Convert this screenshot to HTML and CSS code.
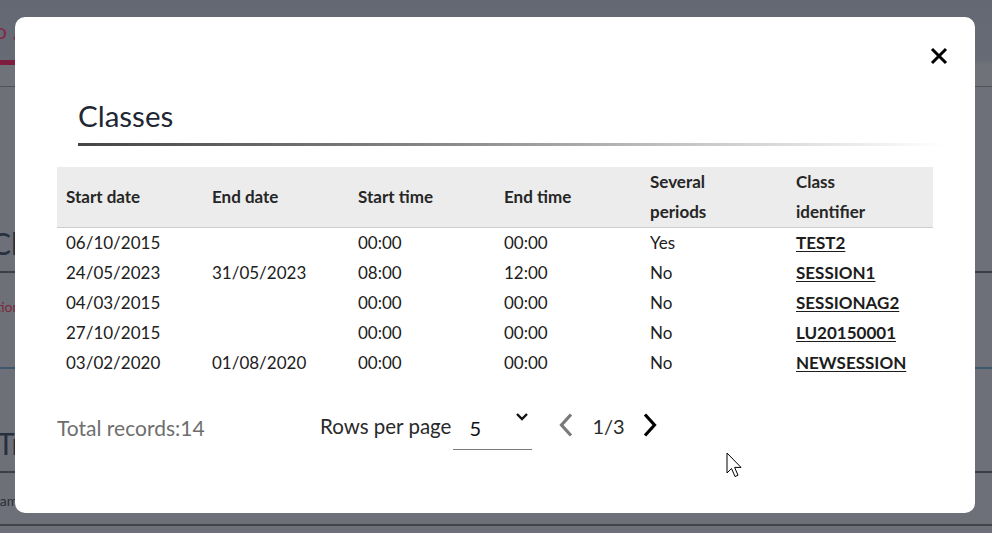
FILE: index.html
```html
<!DOCTYPE html>
<html lang="en">
<head>
<meta charset="utf-8">
<title>Classes</title>
<link rel="stylesheet" href="styles.css">
</head>
<body>
<div class="page">
  <header class="topbar">
    <div class="nav">
      <span class="nav-item">Info /</span>
    </div>
    <div class="nav-bar"></div>
  </header>
  <main class="content">
    <h2 class="bg-title">Classes</h2>
    <p class="bg-link">Action</p>
    <div class="bg-divider"></div>
    <h2 class="bg-title second">Trainers</h2>
    <p class="bg-text">name</p>
  </main>
</div>

<div class="overlay">
  <div class="modal">
    <div class="close-row">
      <button class="close" aria-label="Close">
        <svg width="18" height="18" viewBox="0 0 18 18"><path d="M2 2 L16 16 M16 2 L2 16" stroke="#000" stroke-width="3" stroke-linecap="butt"/></svg>
      </button>
    </div>
    <h1 class="title">Classes</h1>
    <table class="grid">
      <thead>
        <tr>
          <th>Start date</th>
          <th>End date</th>
          <th>Start time</th>
          <th>End time</th>
          <th>Several periods</th>
          <th>Class identifier</th>
        </tr>
      </thead>
      <tbody>
        <tr><td>06/10/2015</td><td></td><td>00:00</td><td>00:00</td><td>Yes</td><td><a href="#">TEST2</a></td></tr>
        <tr><td>24/05/2023</td><td>31/05/2023</td><td>08:00</td><td>12:00</td><td>No</td><td><a href="#">SESSION1</a></td></tr>
        <tr><td>04/03/2015</td><td></td><td>00:00</td><td>00:00</td><td>No</td><td><a href="#">SESSIONAG2</a></td></tr>
        <tr><td>27/10/2015</td><td></td><td>00:00</td><td>00:00</td><td>No</td><td><a href="#">LU20150001</a></td></tr>
        <tr><td>03/02/2020</td><td>01/08/2020</td><td>00:00</td><td>00:00</td><td>No</td><td><a href="#">NEWSESSION</a></td></tr>
      </tbody>
    </table>
    <div class="footer">
      <div class="total">Total records:14</div>
      <div class="pager">
        <span class="rows-label">Rows per page</span>
        <div class="select">
          <span class="select-value">5</span>
          <svg class="select-caret" width="12" height="8" viewBox="0 0 12 8"><path d="M1 1 L6 6 L11 1" fill="none" stroke="#111" stroke-width="2.4"/></svg>
        </div>
        <button class="nav-btn prev" aria-label="Previous">
          <svg width="14" height="24" viewBox="0 0 14 24"><path d="M12 1.5 L2.5 12 L12 22.5" fill="none" stroke="#7a7a7a" stroke-width="3.2"/></svg>
        </button>
        <span class="page-num">1/3</span>
        <button class="nav-btn next" aria-label="Next">
          <svg width="14" height="24" viewBox="0 0 14 24"><path d="M2 1.5 L11.5 12 L2 22.5" fill="none" stroke="#000" stroke-width="3.2"/></svg>
        </button>
      </div>
    </div>
  </div>
</div>

<svg class="cursor" width="20" height="30" viewBox="0 0 20 30"><path d="M1 1 L1 21 L5.5 16.5 L9 24.5 L12 23.2 L8.6 15.4 L15 15.4 Z" fill="#fff" stroke="#000" stroke-width="1" stroke-linejoin="miter"/></svg>
</body>
</html>
```

FILE: styles.css
```css
html, body {
  margin: 0;
  padding: 0;
}
body {
  width: 992px;
  height: 533px;
  overflow: hidden;
  background: #6d7079;
  font-family: Lato, "Open Sans", sans-serif;
}

/* ---------- dimmed page behind the dialog ---------- */
.page {
  height: 533px;
  display: flex;
  flex-direction: column;
}
.topbar {
  height: 86px;
  background: linear-gradient(180deg, #636873 0%, #666b75 60px, #6f7279 64px, #6f7279 100%);
  border-bottom: 1px solid #4f525a;
  display: flex;
  flex-direction: column;
}
.nav {
  height: 60px;
  display: flex;
  align-items: center;
}
.nav-item {
  margin-left: -31px;
  color: #82294a;
  font-size: 22px;
  white-space: nowrap;
}
.nav-bar {
  height: 5px;
  width: 60px;
  background: #7e1d3e;
}
.content {
  flex: 1;
  display: flex;
  flex-direction: column;
  border-bottom: 2px solid #41444b;
  margin-bottom: 7px;
}
.bg-title {
  margin: 0;
  margin-left: -9px;
  padding-top: 138px;
  padding-bottom: 10px;
  font-size: 30px;
  font-weight: 400;
  line-height: 36px;
  color: #27303c;
  border-bottom: 2px solid #3b3f47;
  white-space: nowrap;
}
.bg-link {
  margin: 24px 0 0 -20px;
  font-size: 14px;
  line-height: 20px;
  color: #7a2a36;
}
.bg-divider {
  margin-top: 50px;
  height: 2px;
  background: #3e586b;
}
.bg-title.second {
  padding-top: 56px;
  margin-left: -3px;
}
.bg-text {
  margin: 18px 0 0 -8px;
  font-size: 14px;
  line-height: 20px;
  color: #2b2f36;
}

/* ---------- dialog ---------- */
.overlay {
  position: fixed;
  inset: 0;
}
.modal {
  position: absolute;
  left: 15px;
  top: 17px;
  width: 960px;
  height: 496px;
  box-sizing: border-box;
  background: #fff;
  border-radius: 10px;
  padding: 30px 42px 0 42px;
  display: flex;
  flex-direction: column;
}
.close-row {
  display: flex;
  justify-content: flex-end;
  margin-right: -15px;
  height: 18px;
}
.close {
  border: 0;
  padding: 0;
  margin: 0;
  background: none;
  width: 18px;
  height: 18px;
  display: block;
}
.close svg {
  display: block;
}
.title {
  margin: 34px -12px 0 21px;
  font-size: 29.5px;
  font-weight: 400;
  line-height: 34px;
  color: #1e2733;
  padding-bottom: 10px;
  position: relative;
}
.title::after {
  content: "";
  position: absolute;
  left: 0;
  right: 0;
  bottom: -3px;
  height: 3px;
  background: linear-gradient(90deg, #454545 0%, #8e8e8e 45%, #cfcfcf 75%, rgba(255,255,255,0) 100%);
}

.grid {
  margin-top: 24px;
  width: 876px;
  border-collapse: collapse;
  table-layout: fixed;
  font-size: 17px;
  color: #202020;
}
.grid th {
  background: #ececec;
  text-align: left;
  font-weight: 700;
  line-height: 30px;
  height: 60px;
  padding: 0 40px 0 9px;
  vertical-align: middle;
  border-bottom: 1px solid #cdcdcd;
  width: 146px;
  box-sizing: border-box;
  color: #262626;
}
.grid td {
  height: 30px;
  line-height: 30px;
  padding: 0 9px;
  vertical-align: middle;
}
.grid a {
  color: #1c1c1c;
  font-weight: 700;
  text-decoration: underline;
  text-underline-offset: 2px;
}

.footer {
  margin-top: 26px;
  height: 46px;
  display: flex;
  align-items: center;
}
.total {
  width: 263px;
  font-size: 21px;
  color: #6e6e6e;
}
.pager {
  display: flex;
  align-items: center;
  height: 46px;
}
.rows-label {
  font-size: 20.5px;
  color: #2a2a2a;
  margin-bottom: 3px;
}
.select {
  margin-left: 2px;
  width: 79px;
  height: 46px;
  box-sizing: border-box;
  border-bottom: 1px solid #7a7a7a;
  display: flex;
  align-items: center;
}
.select-value {
  margin-left: 16px;
  font-size: 20px;
  color: #111;
  padding-top: 3px;
}
.select-caret {
  margin-left: 35px;
  align-self: flex-start;
  margin-top: 9px;
}
.nav-btn {
  border: 0;
  background: none;
  padding: 0;
  margin: 0 0 4px 0;
  width: 14px;
  height: 24px;
  display: block;
}
.nav-btn svg {
  display: block;
}
.prev {
  margin-left: 27px;
}
.page-num {
  margin-left: 19px;
  font-size: 20px;
  color: #2a2a2a;
  margin-bottom: 2px;
}
.next {
  margin-left: 18px;
}

.cursor {
  position: fixed;
  left: 726px;
  top: 452px;
}
```
